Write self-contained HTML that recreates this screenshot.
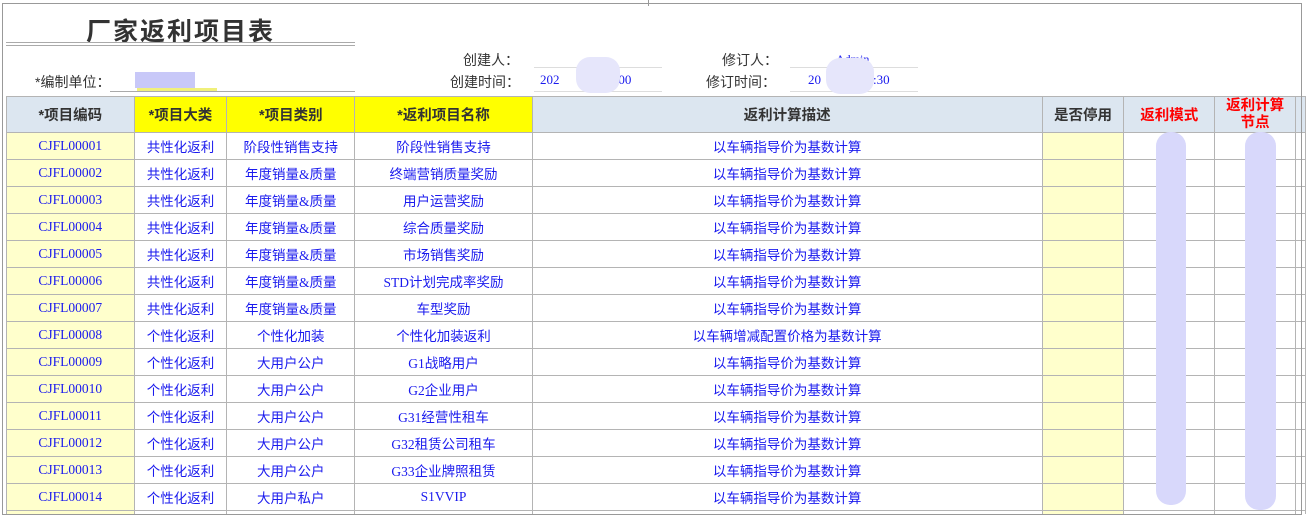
<!DOCTYPE html>
<html><head><meta charset="utf-8"><style>
html,body{margin:0;width:1306px;height:517px;overflow:hidden}
body{background:#fff;font-family:"Liberation Serif","Noto Sans CJK SC",sans-serif;position:relative}
.a{position:absolute}
table{position:absolute;left:6px;top:96px;border-collapse:collapse;table-layout:fixed}
td{border:1px solid #b4b4b4;height:26px;padding:0;text-align:center;font-size:13.5px;color:#1a1aee;white-space:nowrap;overflow:hidden;font-family:"Liberation Serif","Noto Sans CJK SC",sans-serif}
tr.h td{height:35px;font-weight:bold;color:#333;font-size:14.5px;background:#dce6f0;font-family:"Liberation Sans","Noto Sans CJK SC",sans-serif}
tr.h td.y{background:#ffff00}
tr.h td.r{color:#f00}
td.c{background:#ffffcc}
.lbl{font-family:"Liberation Sans","Noto Sans CJK SC",sans-serif;font-size:14px;color:#333}
.blur{position:absolute;background:#d8d8fb;border-radius:14px}
</style></head><body>
<div class="a lbl" style="left:86px;top:12px;font-size:25px;font-weight:bold;letter-spacing:2px;color:#333">厂家返利项目表</div>
<div class="a" style="left:6px;top:42px;width:349px;height:1px;background:#aaa"></div>
<div class="a" style="left:6px;top:45px;width:349px;height:1px;background:#aaa"></div>
<div class="a lbl" style="left:463px;top:50px">创建人：</div>
<div class="a lbl" style="left:450px;top:72px">创建时间：</div>
<div class="a lbl" style="left:722px;top:50px">修订人：</div>
<div class="a lbl" style="left:706px;top:72px">修订时间：</div>
<div class="a lbl" style="left:35px;top:72px">*编制单位：</div>
<div class="a" style="left:110px;top:91px;width:245px;height:1px;background:#aaa"></div>
<div class="a" style="left:534px;top:67px;width:128px;height:1px;background:#ddd"></div>
<div class="a" style="left:534px;top:91px;width:128px;height:1px;background:#ddd"></div>
<div class="a" style="left:790px;top:67px;width:128px;height:1px;background:#ddd"></div>
<div class="a" style="left:790px;top:91px;width:128px;height:1px;background:#ddd"></div>
<div class="a" style="left:540px;top:72px;font-size:13px;color:#1a1aee">202&nbsp;&nbsp;&nbsp;&nbsp;&nbsp;&nbsp;&nbsp;&nbsp;&nbsp;&nbsp;&nbsp;&nbsp;&nbsp;&nbsp;&nbsp;1:00</div>
<div class="a" style="left:808px;top:72px;font-size:13px;color:#1a1aee">20&nbsp;&nbsp;&nbsp;&nbsp;&nbsp;&nbsp;&nbsp;&nbsp;&nbsp;&nbsp;&nbsp;&nbsp;&nbsp;&nbsp;&nbsp;&nbsp;:30</div>
<div class="a" style="left:836px;top:52px;font-size:12px;color:#1a1aee">Admin</div>
<div class="a" style="left:135px;top:72px;width:60px;height:16px;background:#c8c8f8"></div>
<div class="a" style="left:137px;top:88px;width:80px;height:3px;background:#f0f07a"></div>
<div class="blur" style="left:576px;top:57px;width:44px;height:36px;background:#e6e6fb"></div>
<div class="blur" style="left:826px;top:58px;width:48px;height:36px;background:#e6e6fb"></div>
<table>
<colgroup><col style="width:128px"><col style="width:93px"><col style="width:128px"><col style="width:178px"><col style="width:512px"><col style="width:82px"><col style="width:91px"><col style="width:81px"><col style="width:10px"></colgroup>
<tr class="h"><td>*项目编码</td><td class="y">*项目大类</td><td class="y">*项目类别</td><td class="y">*返利项目名称</td><td>返利计算描述</td><td>是否停用</td><td class="r">返利模式</td><td class="r" style="line-height:17px">返利计算<br>节点</td><td></td></tr>
<tr><td class="c">CJFL00001</td><td>共性化返利</td><td>阶段性销售支持</td><td>阶段性销售支持</td><td>以车辆指导价为基数计算</td><td class="c"></td><td></td><td></td><td></td></tr>
<tr><td class="c">CJFL00002</td><td>共性化返利</td><td>年度销量&amp;质量</td><td>终端营销质量奖励</td><td>以车辆指导价为基数计算</td><td class="c"></td><td></td><td></td><td></td></tr>
<tr><td class="c">CJFL00003</td><td>共性化返利</td><td>年度销量&amp;质量</td><td>用户运营奖励</td><td>以车辆指导价为基数计算</td><td class="c"></td><td></td><td></td><td></td></tr>
<tr><td class="c">CJFL00004</td><td>共性化返利</td><td>年度销量&amp;质量</td><td>综合质量奖励</td><td>以车辆指导价为基数计算</td><td class="c"></td><td></td><td></td><td></td></tr>
<tr><td class="c">CJFL00005</td><td>共性化返利</td><td>年度销量&amp;质量</td><td>市场销售奖励</td><td>以车辆指导价为基数计算</td><td class="c"></td><td></td><td></td><td></td></tr>
<tr><td class="c">CJFL00006</td><td>共性化返利</td><td>年度销量&amp;质量</td><td>STD计划完成率奖励</td><td>以车辆指导价为基数计算</td><td class="c"></td><td></td><td></td><td></td></tr>
<tr><td class="c">CJFL00007</td><td>共性化返利</td><td>年度销量&amp;质量</td><td>车型奖励</td><td>以车辆指导价为基数计算</td><td class="c"></td><td></td><td></td><td></td></tr>
<tr><td class="c">CJFL00008</td><td>个性化返利</td><td>个性化加装</td><td>个性化加装返利</td><td>以车辆增减配置价格为基数计算</td><td class="c"></td><td></td><td></td><td></td></tr>
<tr><td class="c">CJFL00009</td><td>个性化返利</td><td>大用户公户</td><td>G1战略用户</td><td>以车辆指导价为基数计算</td><td class="c"></td><td></td><td></td><td></td></tr>
<tr><td class="c">CJFL00010</td><td>个性化返利</td><td>大用户公户</td><td>G2企业用户</td><td>以车辆指导价为基数计算</td><td class="c"></td><td></td><td></td><td></td></tr>
<tr><td class="c">CJFL00011</td><td>个性化返利</td><td>大用户公户</td><td>G31经营性租车</td><td>以车辆指导价为基数计算</td><td class="c"></td><td></td><td></td><td></td></tr>
<tr><td class="c">CJFL00012</td><td>个性化返利</td><td>大用户公户</td><td>G32租赁公司租车</td><td>以车辆指导价为基数计算</td><td class="c"></td><td></td><td></td><td></td></tr>
<tr><td class="c">CJFL00013</td><td>个性化返利</td><td>大用户公户</td><td>G33企业牌照租赁</td><td>以车辆指导价为基数计算</td><td class="c"></td><td></td><td></td><td></td></tr>
<tr><td class="c">CJFL00014</td><td>个性化返利</td><td>大用户私户</td><td>S1VVIP</td><td>以车辆指导价为基数计算</td><td class="c"></td><td></td><td></td><td></td></tr>
<tr><td class="c"></td><td></td><td></td><td></td><td></td><td class="c"></td><td></td><td></td><td></td></tr>
</table>
<div class="a" style="left:0;top:514px;width:1306px;height:3px;background:#fff"></div>
<div class="a" style="left:2px;top:3px;width:1298px;height:510px;border:1px solid #999"></div>
<div class="a" style="left:648px;top:0;width:1px;height:6px;background:#999"></div>
<div class="blur" style="left:1156px;top:132px;width:30px;height:373px"></div>
<div class="blur" style="left:1245px;top:132px;width:31px;height:378px"></div>
</body></html>
